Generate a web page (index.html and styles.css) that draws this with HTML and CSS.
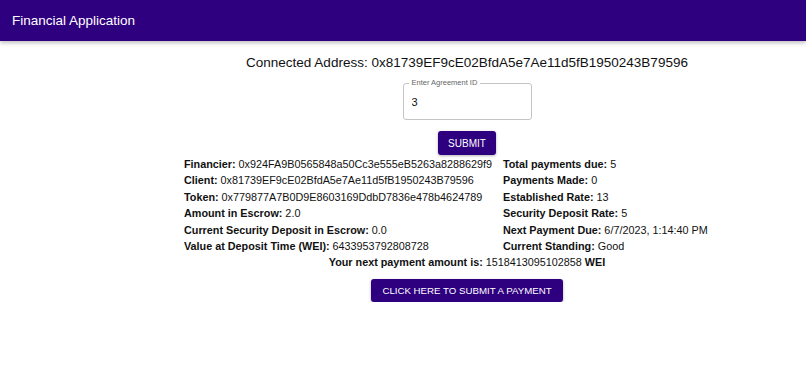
FILE: index.html
```html
<!DOCTYPE html>
<html lang="en">
<head>
    <meta charset="UTF-8">
    <meta name="viewport" content="width=device-width, initial-scale=1.0">
    <title>Financial Application</title>
    <link rel="stylesheet" href="styles.css">
</head>
<body>

    <!-- App Bar -->
    <header class="app-bar">
        <h1>Financial Application</h1>
    </header>

    <main class="main">
        <p class="address">Connected Address: 0x81739EF9cE02BfdA5e7Ae11d5fB1950243B79596</p>

        <div class="field">
            <label for="agreementId">Enter Agreement ID</label>
            <input type="text" id="agreementId" value="3">
        </div>

        <button type="button" class="button">SUBMIT</button>

        <div class="details">
            <div class="col">
                <p><b>Financier:</b> 0x924FA9B0565848a50Cc3e555eB5263a8288629f9</p>
                <p><b>Client:</b> 0x81739EF9cE02BfdA5e7Ae11d5fB1950243B79596</p>
                <p><b>Token:</b> 0x779877A7B0D9E8603169DdbD7836e478b4624789</p>
                <p><b>Amount in Escrow:</b> 2.0</p>
                <p><b>Current Security Deposit in Escrow:</b> 0.0</p>
                <p><b>Value at Deposit Time (WEI):</b> 6433953792808728</p>
            </div>
            <div class="col">
                <p><b>Total payments due:</b> 5</p>
                <p><b>Payments Made:</b> 0</p>
                <p><b>Established Rate:</b> 13</p>
                <p><b>Security Deposit Rate:</b> 5</p>
                <p><b>Next Payment Due:</b> 6/7/2023, 1:14:40 PM</p>
                <p><b>Current Standing:</b> Good</p>
            </div>
        </div>

        <p class="next-payment"><b>Your next payment amount is:</b> 1518413095102858 <b>WEI</b></p>

        <button type="button" class="button pay">CLICK HERE TO SUBMIT A PAYMENT</button>
    </main>

</body>
</html>
```

FILE: styles.css
```css
body {
    margin: 0;
    font-family: "Liberation Sans", Arial, sans-serif;
    color: #111;
    background: #fff;
}

/* App bar */
.app-bar {
    height: 41px;
    background-color: #2e0080;
    box-shadow: 0 2px 4px rgba(0, 0, 0, 0.25);
    display: flex;
    align-items: center;
    padding: 0 12px;
}

.app-bar h1 {
    margin: 0;
    color: #fff;
    font-size: 13.5px;
    font-weight: normal;
}

/* Main content */
.main {
    padding-left: 128px;
    display: flex;
    flex-direction: column;
    align-items: center;
}

.address {
    margin: 14px 0 0;
    font-size: 13.5px;
}

.field {
    position: relative;
    margin-top: 13px;
}

.field label {
    position: absolute;
    top: -5px;
    left: 6px;
    padding: 0 3px;
    background: #fff;
    font-size: 7.5px;
    color: #666;
}

.field input {
    box-sizing: border-box;
    width: 129px;
    height: 37px;
    border: 1px solid #c4c4c4;
    border-radius: 3px;
    padding: 0 8px;
    font-family: inherit;
    font-size: 11px;
    color: #111;
}

.button {
    margin-top: 11px;
    background-color: #2e0080;
    color: #fff;
    border: none;
    border-radius: 3px;
    font-family: inherit;
    font-size: 10px;
    height: 24px;
    padding: 0 10px;
    box-shadow: 0 1px 3px rgba(0, 0, 0, 0.3);
    cursor: pointer;
}

.details {
    align-self: flex-start;
    margin-left: 56px;
    margin-top: 1px;
    display: flex;
    gap: 11px;
}

.details p,
.next-payment {
    margin: 0;
    font-size: 10.8px;
    line-height: 16.4px;
}

.pay {
    margin-top: 8px;
    height: 23px;
    padding: 0 11px;
    font-size: 9.7px;
}
```
